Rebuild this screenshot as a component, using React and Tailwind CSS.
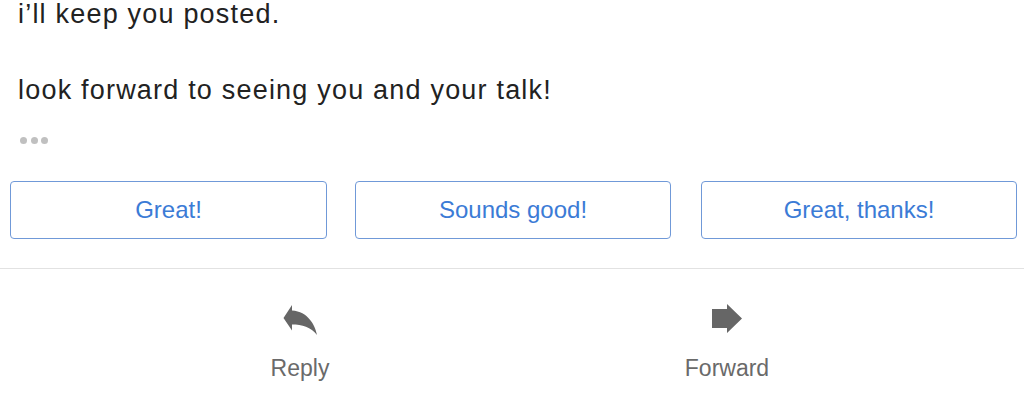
import React from 'react'

const REPLIES = [
  { label: 'Great!', cls: 'w-[317px]' },
  { label: 'Sounds good!', cls: 'w-[316px] ml-[28px]' },
  { label: 'Great, thanks!', cls: 'w-[316px] ml-[30px]' },
]

function ReplyIcon() {
  return (
    <svg width="36" height="34" viewBox="0 0 36 34" fill="#666666">
      <path d="M1.5 15 L10 2 L10 7.5 C26 8.5 33 22 35 32 C29 24 20 21.5 10 21.5 L10 27.5 Z" />
    </svg>
  )
}

function ForwardIcon() {
  return (
    <svg width="32" height="30" viewBox="0 0 32 30" fill="#666666">
      <path d="M1 5 L16 5 L16 0 L31 14.5 L16 29 L16 24 L1 24 Z" />
    </svg>
  )
}

function Action({ icon, label }) {
  return (
    <div className="w-[160px] flex flex-col items-center">
      <div className="h-[34px] flex items-start justify-center">{icon}</div>
      <span className="mt-[20px] text-[23px] leading-[23px] text-[#6a6a6a]">{label}</span>
    </div>
  )
}

export default function App() {
  return (
    <div
      className="w-[1024px] h-[412px] overflow-hidden bg-white"
      style={{ fontFamily: '"Liberation Sans", Arial, sans-serif' }}
    >
      {/* Message body */}
      <div className="px-[18px] pt-[1px] text-[27px] tracking-[1.2px] text-[#222222]">
        <p className="leading-[26px]">i’ll keep you posted.</p>
        <p className="mt-[44.4px] leading-[38.5px]">look forward to seeing you and your talk!</p>
      </div>

      {/* Trimmed content */}
      <div className="flex gap-[3.5px] pl-[20px] mt-[27.5px]">
        <span className="w-[7px] h-[7px] rounded-full bg-[#c0c0c0]" />
        <span className="w-[7px] h-[7px] rounded-full bg-[#c0c0c0]" />
        <span className="w-[7px] h-[7px] rounded-full bg-[#c0c0c0]" />
      </div>

      {/* Smart replies */}
      <div className="flex pl-[10px] mt-[36.5px]">
        {REPLIES.map((r) => (
          <button
            key={r.label}
            className={`${r.cls} shrink-0 h-[58px] flex items-center justify-center border-[1.5px] border-[#7099d8] rounded-[4px] text-[24px] text-[#3b7bd6] bg-white`}
          >
            {r.label}
          </button>
        ))}
      </div>

      <div className="mt-[29px] h-px bg-[#e2e2e2]" />

      {/* Toolbar */}
      <div className="flex justify-center gap-[267px] mt-[34px] pl-[3px]">
        <Action icon={<ReplyIcon />} label="Reply" />
        <Action icon={<div className="mt-[1px]"><ForwardIcon /></div>} label="Forward" />
      </div>
    </div>
  )
}
